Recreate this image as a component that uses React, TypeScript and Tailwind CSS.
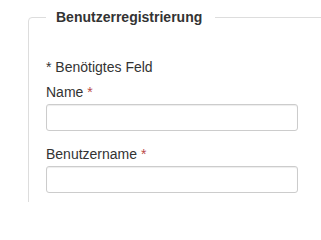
export default function App() {
  return (
    <div className="h-[202px] w-[321px] overflow-hidden bg-white font-['Liberation_Sans',Arial,sans-serif] text-[14px] text-[#333]">
      <fieldset className="mt-[7px] ml-[28px] w-[360px] rounded-tl-[4px] border border-[#ddd] pl-[17px] pt-[30px] pb-[80px]">
        <legend className="pl-[10px] pr-[13px] text-[14px] font-bold leading-5 text-[#333]">
          Benutzerregistrierung
        </legend>

        <p className="mb-[5px] leading-5">* Benötigtes Feld</p>

        <label className="mb-[2px] block leading-5">
          Name <span className="text-[#b94a48]">*</span>
        </label>
        <input
          type="text"
          className="block h-[27px] w-[252px] rounded-[3px] border border-[#ccc] bg-white px-2 shadow-[inset_0_1px_1px_rgba(0,0,0,0.075)] outline-none"
        />

        <label className="mt-[13px] mb-[2px] block leading-5">
          Benutzername <span className="text-[#b94a48]">*</span>
        </label>
        <input
          type="text"
          className="block h-[27px] w-[252px] rounded-[3px] border border-[#ccc] bg-white px-2 shadow-[inset_0_1px_1px_rgba(0,0,0,0.075)] outline-none"
        />
      </fieldset>
    </div>
  );
}
